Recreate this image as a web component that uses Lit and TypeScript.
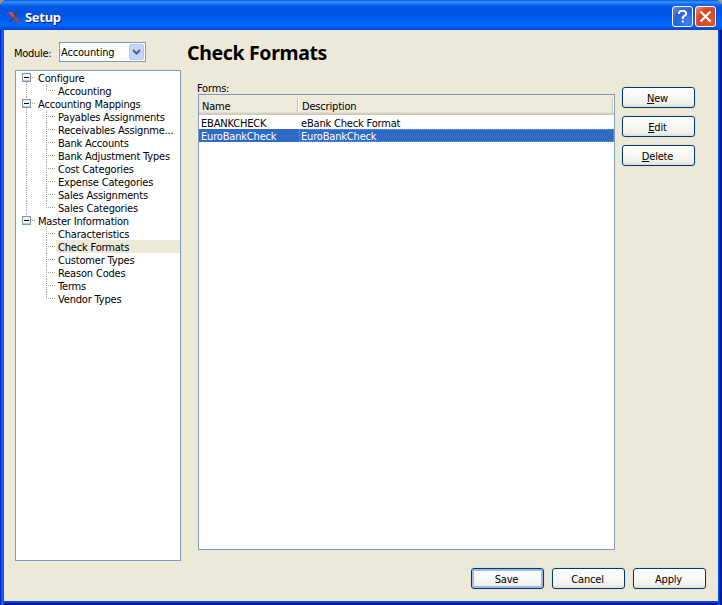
import { LitElement, html, css, svg, nothing } from "lit";
import { customElement, property } from "lit/decorators.js";
import { classMap } from "lit/directives/class-map.js";

interface TreeGroup {
  label: string;
  children: string[];
}

const MODULES: TreeGroup[] = [
  { label: "Configure", children: ["Accounting"] },
  {
    label: "Accounting Mappings",
    children: [
      "Payables Assignments",
      "Receivables Assignme...",
      "Bank Accounts",
      "Bank Adjustment Types",
      "Cost Categories",
      "Expense Categories",
      "Sales Assignments",
      "Sales Categories",
    ],
  },
  {
    label: "Master Information",
    children: ["Characteristics", "Check Formats", "Customer Types", "Reason Codes", "Terms", "Vendor Types"],
  },
];

const FORMS = [
  { name: "EBANKCHECK", description: "eBank Check Format" },
  { name: "EuroBankCheck", description: "EuroBankCheck" },
];

@customElement("push-button")
export class PushButton extends LitElement {
  @property() label = "";
  @property({ type: Boolean }) mnemonic = false;
  @property({ type: Boolean }) primary = false;

  static styles = css`
    :host { display: block; width: 73px; height: 21px; }
    button {
      display: flex; align-items: center; justify-content: center;
      box-sizing: border-box; width: 100%; height: 100%; margin: 0; padding: 1px 2px 0 0;
      border: 1px solid #003c74; border-radius: 3px;
      background: linear-gradient(#ffffff, #f6f5f1 60%, #f0efe8 85%, #dcd8ce);
      box-shadow: 0 0 0 1px #e3e0d2;
      font: inherit; letter-spacing: inherit; color: #000; white-space: pre;
    }
    .primary { box-shadow: inset 0 0 0 2px #9ebbeb, 0 0 0 1px #e3e0d2; }
    u { text-underline-offset: 1px; text-decoration-thickness: 1px; text-decoration-skip-ink: none; }
  `;

  render() {
    return html`<button class=${classMap({ primary: this.primary })}
      ><span>${this.mnemonic ? html`<u>${this.label[0]}</u>${this.label.slice(1)}` : this.label}</span></button>`;
  }
}

@customElement("nav-tree")
export class NavTree extends LitElement {
  @property() selected = "";

  static styles = css`
    :host { display: block; box-sizing: border-box; border: 1px solid #7f9db9; background: #fff; overflow: hidden; }
    .row { display: flex; height: 13px; line-height: 15px; white-space: nowrap; }
    svg { flex: none; display: block; }
    .label { flex: 1; padding-left: 2px; }
    .selected { background: #ece9d8; }
  `;

  private rootGlyph(first: boolean, last: boolean) {
    return html`<svg width="20" height="13" shape-rendering="crispEdges">
      <g stroke="#aca899" stroke-dasharray="1 1">
        ${first ? nothing : svg`<path d="M10.5 0V2" />`}
        ${last ? nothing : svg`<path d="M10.5 11V13" />`}
        <path d="M16 6.5H20" />
      </g>
      <rect x="6.5" y="2.5" width="8" height="8" rx="1" fill="#f4f2ec" stroke="#7898b5" />
      <path d="M7 9.5H14" stroke="#cfc9bb" />
      <path d="M8 6.5H13" stroke="#000" />
    </svg>`;
  }

  private leafGlyph(lastLeaf: boolean, lastGroup: boolean) {
    return html`<svg width="40" height="13" shape-rendering="crispEdges">
      <g stroke="#aca899" stroke-dasharray="1 1">
        ${lastGroup ? nothing : svg`<path d="M10.5 0V13" />`}
        <path d=${lastLeaf ? "M30.5 0V7" : "M30.5 0V13"} />
        <path d="M32 6.5H40" />
      </g>
    </svg>`;
  }

  render() {
    return MODULES.map((g, i) => {
      const last = i === MODULES.length - 1;
      return html`<div class="row">${this.rootGlyph(i === 0, last)}<span class="label">${g.label}</span></div>
        ${g.children.map((c, j) => html`<div class="row">${this.leafGlyph(j === g.children.length - 1, last)}<span
            class=${classMap({ label: true, selected: c === this.selected })}>${c}</span></div>`)}`;
    });
  }
}

@customElement("app-root")
export class AppRoot extends LitElement {
  static styles = css`
    :host {
      display: flex; flex-direction: column; box-sizing: border-box; width: 722px; height: 605px;
      overflow: hidden; background: #9c9a8c;
      font: 11px "DejaVu Sans Condensed", "DejaVu Sans", sans-serif; font-stretch: condensed;
      letter-spacing: -0.18px; color: #000;
    }
    .window {
      display: flex; flex-direction: column; flex: 1; border-radius: 7px 7px 0 0; overflow: hidden;
      background: #0831d9;
    }
    .title {
      display: flex; align-items: center; flex: none; height: 30px; box-sizing: border-box; padding: 3px 6px 0 7px;
      background: linear-gradient(#0058e6 0, #3a93ff 2px, #1372ee 4px, #0058e6 7px, #0054e3 13px, #005cf0 18px, #0066ff 24px, #0062f8 26px, #0046c8 30px);
    }
    .caption {
      flex: 1; margin-left: 4px; font: bold 13px "Noto Sans", sans-serif; letter-spacing: -0.3px;
      color: #fff; text-shadow: 1px 1px 0 #0a1883;
    }
    .title svg { display: block; flex: none; }
    .help, .close {
      box-sizing: border-box; width: 21px; height: 21px; border: 1px solid #fff; border-radius: 3px;
    }
    .help { background: radial-gradient(circle at 80% 80%, #3c80f5, #2860dd 60%, #6a93e8); }
    .close { margin-left: 2px; background: radial-gradient(circle at 80% 80%, #e45a2c, #d8431f 60%, #eb967d); }
    .frame {
      flex: 1; display: flex; min-height: 0; padding: 0 4px 4px;
      background: linear-gradient(to right, #0019cf, #0831d9 1px, #166aee 2px, #0855dd 4px, #0855dd 718px, #0441d8 719px, #001da0 721px, #00138c);
    }
    .client { flex: 1; display: flex; flex-direction: column; background: #ece9d8; padding: 0 11px 12px; box-shadow: 0 2px 0 #0046dd, 0 4px 0 #00189c; }
    .panes { flex: 1; display: flex; min-height: 0; }
    .left { display: flex; flex-direction: column; width: 166px; padding-top: 12px; }
    .module { display: flex; align-items: center; height: 20px; }
    .module-label { width: 45px; margin-left: -1px; padding-top: 2px; letter-spacing: -0.3px; }
    .combo {
      display: flex; align-items: center; box-sizing: border-box; width: 87px; height: 20px; padding: 0 1px 0 1px;
      border: 1px solid #7f9db9; background: #fff;
    }
    .combo span { flex: 1; }
    nav-tree { margin-top: 8px; height: 491px; }
    .right { flex: 1; display: flex; flex-direction: column; padding-left: 6px; }
    h1 { margin: 10px 0 0; height: 26px; font: bold 19.5px/25px "Noto Sans", sans-serif; letter-spacing: -0.35px; }
    .forms { display: flex; margin: 16px 0 0 11px; }
    .forms-label { height: 12px; line-height: 13px; margin-left: -1px; }
    .table { box-sizing: border-box; width: 417px; height: 456px; border: 1px solid #7f9db9; background: #fff; }
    .head {
      display: flex; align-items: center; height: 20px;
      background: linear-gradient(#ebeadb 0 17px, #e2decd 17px 18px, #d6d2c2 18px 19px, #cbc7b8 19px);
    }
    .head div { box-sizing: border-box; height: 15px; line-height: 17px; padding-left: 3px; border-right: 1px solid #c7c5b2; box-shadow: 1px 0 #fff; }
    .c1 { width: 100px; }
    .c2 { flex: 1; }
    .head .c1 { width: 99px; }
    .head .c2 { padding-left: 4px; margin-right: 1px; }
    .line { display: flex; height: 13px; line-height: 15px; }
    .line div { box-sizing: border-box; padding-left: 2px; }
    .body { padding-top: 1px; }
    .active { background: #316ac5; color: #fff; }
    .active .c2 { outline: 1px dotted #ce953a; outline-offset: -1px; }
    .actions { display: flex; flex-direction: column; gap: 8px; margin: 5px 0 0 7px; }
    .footer { display: flex; gap: 8px; justify-content: flex-end; padding-right: 1px; }
  `;

  render() {
    return html`<div class="window">
      <div class="title">
        <svg width="14" height="14" viewBox="0 0 14 14">
          <path d="M8 6L13 12H9L6 8Z" fill="#b03a3c" />
          <path d="M9 1H12.5L4.5 12H1L6 6Z" fill="#2b4a78" /><path d="M1 2H5L8 6 6 8Z" fill="#d64a28" />
        </svg>
        <div class="caption">Setup</div>
        <div class="help"><svg width="19" height="19" viewBox="0 0 19 19" fill="none" stroke="#fff" stroke-width="2">
          <path d="M6 7V5.5L7.5 4H11.5L13 5.5V7.5L9.8 10.3V12M9.8 13.5V15.5" /></svg></div>
        <div class="close"><svg width="19" height="19" viewBox="0 0 19 19" stroke="#fff" stroke-width="2.2">
          <path d="M4.5 4.5L14.5 14.5M14.5 4.5L4.5 14.5" /></svg></div>
      </div>
      <div class="frame"><div class="client">
        <div class="panes">
          <div class="left">
            <div class="module">
              <div class="module-label">Module:</div>
              <div class="combo"><span>Accounting</span>
                <svg width="15" height="16" viewBox="0 0 15 16">
                  <rect x=".5" y=".5" width="14" height="15" rx="1.5" fill="#c4d5fc" stroke="#b3c8f5" />
                  <path d="M4 6L7.5 9.5 11 6" fill="none" stroke="#4d6185" stroke-width="2" />
                </svg>
              </div>
            </div>
            <nav-tree selected="Check Formats"></nav-tree>
          </div>
          <div class="right">
            <h1>Check Formats</h1>
            <div class="forms">
              <div>
                <div class="forms-label">Forms:</div>
                <div class="table">
                  <div class="head"><div class="c1">Name</div><div class="c2">Description</div></div>
                  <div class="body">${FORMS.map((f, i) => html`<div class=${classMap({ line: true, active: i === 1 })}>
                    <div class="c1">${f.name}</div><div class="c2">${f.description}</div></div>`)}</div>
                </div>
              </div>
              <div class="actions">
                ${["New", "Edit", "Delete"].map((l) => html`<push-button label=${l} mnemonic></push-button>`)}
              </div>
            </div>
          </div>
        </div>
        <div class="footer">
          <push-button label="Save" primary></push-button>
          <push-button label="Cancel"></push-button>
          <push-button label="Apply"></push-button>
        </div>
      </div></div>
    </div>`;
  }
}
